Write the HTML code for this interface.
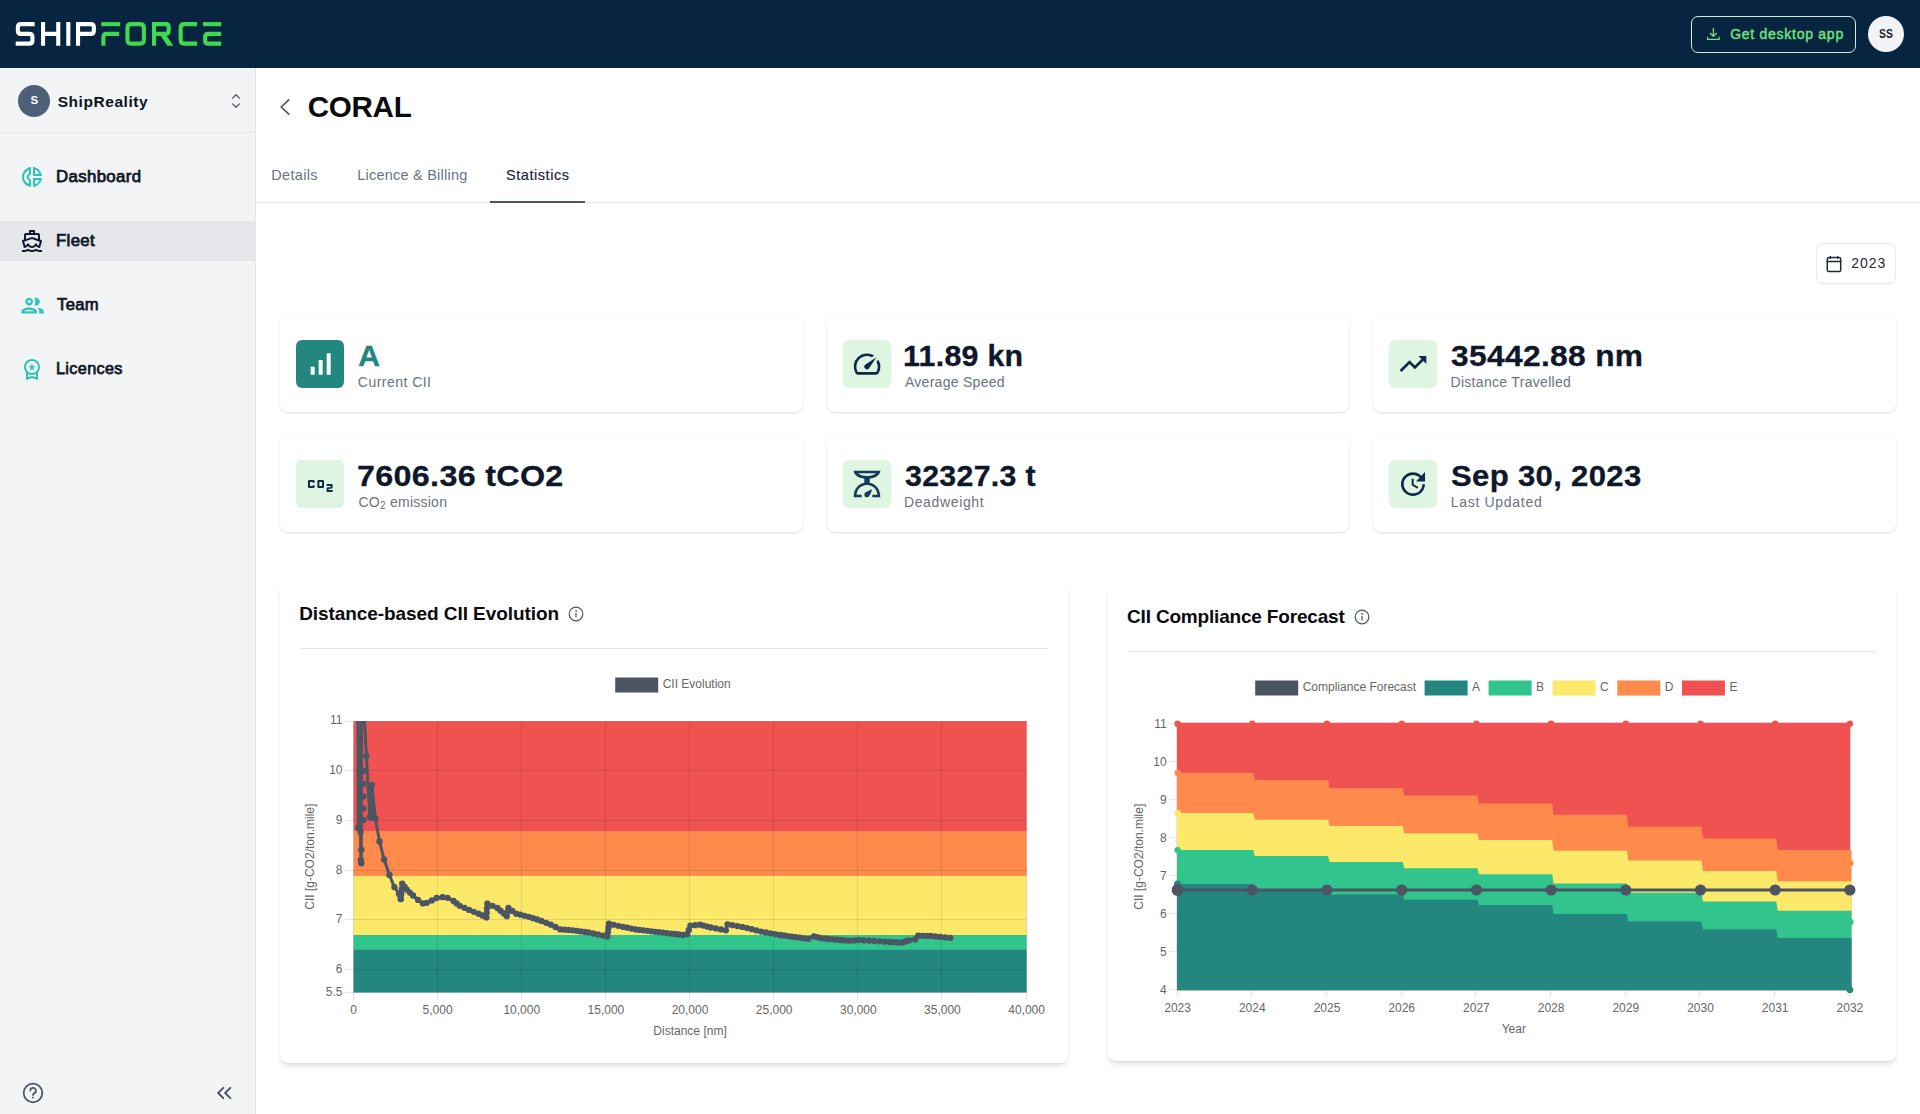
<!DOCTYPE html>
<html><head><meta charset="utf-8"><title>ShipForce</title>
<style>
html,body{margin:0;padding:0}
body{width:1920px;height:1114px;position:relative;overflow:hidden;background:#fff;font-family:"Liberation Sans", sans-serif;}
.t{position:absolute;white-space:nowrap;font-family:"Liberation Sans", sans-serif;}
.abs{position:absolute}
.card{position:absolute;background:#fff;border-radius:8px;box-shadow:0 1px 3px rgba(0,0,0,.10),0 1px 2px -1px rgba(0,0,0,.10);}
.ccard{position:absolute;background:#fff;border-radius:8px;box-shadow:0 4px 6px -1px rgba(0,0,0,.10),0 2px 4px -2px rgba(0,0,0,.10);}
.tile{position:absolute;width:48px;height:48px;border-radius:6px;background:#def5e1}
svg{position:absolute;overflow:visible}
</style></head><body>

<div class="abs" style="left:0;top:0;width:1920px;height:68px;background:#072441"></div>
<svg style="left:0;top:0" width="240" height="68" viewBox="0 0 240 68"><path d="M34.6,24.15 H21.05 Q17.85,24.15 17.85,27.349999999999998 V30.7 Q17.85,33.9 21.05,33.9 H29.250000000000004 Q32.45,33.9 32.45,37.1 V40.449999999999996 Q32.45,43.65 29.250000000000004,43.65 H15.7" stroke="#ffffff" stroke-width="4.1" fill="none" stroke-linejoin="miter"/><path d="M43.05,22 V45.8 M58.25,22 V45.8 M43.05,33.9 H58.25" stroke="#ffffff" stroke-width="4.1" fill="none" stroke-linejoin="miter"/><path d="M68.3,22 V45.8" stroke="#ffffff" stroke-width="4.1" fill="none" stroke-linejoin="miter"/><path d="M78.05,45.8 V24.15 H90.64999999999999 Q93.85,24.15 93.85,27.349999999999998 V30.7 Q93.85,33.9 90.64999999999999,33.9 H78.05" stroke="#ffffff" stroke-width="4.1" fill="none" stroke-linejoin="miter"/><path d="M101.25,24.15 H120.2" stroke="#3fd94f" stroke-width="4.1" fill="none" stroke-linejoin="miter"/><path d="M119.2,33.9 H106.60000000000001 Q103.4,33.9 103.4,37.1 V45.8" stroke="#3fd94f" stroke-width="4.1" fill="none" stroke-linejoin="miter"/><path d="M131.05,24.15 H140.3 Q143.9,24.15 143.9,27.75 V40.05 Q143.9,43.65 140.3,43.65 H131.05 Q127.45,43.65 127.45,40.05 V27.75 Q127.45,24.15 131.05,24.15 Z" stroke="#3fd94f" stroke-width="4.1" fill="none" stroke-linejoin="miter"/><path d="M154.05,45.8 V24.15 H165.5 Q168.7,24.15 168.7,27.349999999999998 V30.7 Q168.7,33.9 165.5,33.9 H154.05" stroke="#3fd94f" stroke-width="4.1" fill="none" stroke-linejoin="miter"/><path d="M160.2,35.1 L166.1,35.1 L173.4,45.8 L167.4,45.8 Z" fill="#3fd94f"/><path d="M197.1,24.15 H184.25 Q180.65,24.15 180.65,27.75 V40.05 Q180.65,43.65 184.25,43.65 H197.1" stroke="#3fd94f" stroke-width="4.1" fill="none" stroke-linejoin="miter"/><path d="M203,24.15 H221.2" stroke="#3fd94f" stroke-width="4.1" fill="none" stroke-linejoin="miter"/><path d="M221.2,33.9 H208.35 Q205.15,33.9 205.15,37.1 V40.449999999999996 Q205.15,43.65 208.35,43.65 H221.2" stroke="#3fd94f" stroke-width="4.1" fill="none" stroke-linejoin="miter"/></svg>
<div class="abs" style="left:1691px;top:16px;width:163px;height:35px;border:1px solid #cdeed3;border-radius:7px"></div>
<svg style="left:1705px;top:26px" width="16" height="16" viewBox="0 0 16 16" fill="none" stroke="#6fe27c" stroke-width="1.25" stroke-linecap="round" stroke-linejoin="round"><path d="M8.3 2.4v7.9M5.2 7.2l3.1 3.1 3.1-3.1M2.5 11v2.4h11.7V11"/></svg>
<div class="t " id="t1" style="left:1730.14px;top:27.15px;font-size:14px;line-height:14px;color:#6fe27c;font-weight:normal;letter-spacing:0.736px;-webkit-text-stroke:0.45px #6fe27c;">Get desktop app</div>
<div class="abs" style="left:1868px;top:16px;width:36px;height:36px;border-radius:50%;background:#f3f4f6"></div>
<div class="t " id="t2" style="left:1879.2px;top:27.84px;font-size:12px;line-height:12px;color:#111827;font-weight:bold;letter-spacing:0px;transform:scaleX(0.86);transform-origin:0 0;">SS</div>
<div class="abs" style="left:0;top:68px;width:255px;height:1046px;background:#f3f4f6;border-right:1px solid #e5e7eb"></div>
<div class="abs" style="left:0;top:132px;width:255px;height:1px;background:#e5e7eb"></div>
<div class="abs" style="left:18px;top:85px;width:32px;height:32px;border-radius:50%;background:#4c6079"></div>
<div class="t " id="t3" style="left:30.4px;top:95.37px;font-size:11.5px;line-height:11.5px;color:#fff;font-weight:bold;letter-spacing:0px;">S</div>
<div class="t " id="t4" style="left:57.73px;top:93.88px;font-size:15.5px;line-height:15.5px;color:#0b1220;font-weight:bold;letter-spacing:0.545px;">ShipReality</div>
<svg style="left:230px;top:92px" width="12" height="18" viewBox="0 0 12 18" fill="none" stroke="#4b5563" stroke-width="1.3" stroke-linecap="round" stroke-linejoin="round"><path d="M2.6 6.1L6 2.7l3.4 3.4M2.6 11.9L6 15.3l3.4-3.4"/></svg>
<div class="abs" style="left:0;top:221px;width:255px;height:40px;background:#e5e7eb"></div>
<svg style="left:20px;top:165px" width="24" height="24" viewBox="0 0 24 24" fill="#2ec4b6"><path d="M11 2.050C5.950 2.550 2 6.810 2 12s3.950 9.450 9 9.950V14.900l-1.800-1.700c-.700-.700-.700-1.800 0-2.500L11 9.050V2.050zM9 5.100v3.100l-1.200 1.100c-1.500 1.500-1.500 3.900 0 5.400L9 15.800v3.100C6.100 17.700 4 15.100 4 12s2.100-5.700 5-6.900zM13 2.050V11h8.950C21.500 6.250 17.750 2.500 13 2.050zm2 2.550c2.100.800 3.700 2.400 4.400 4.400H15V4.600zM13 13v8.950c4.750-.450 8.500-4.200 8.950-8.950H13zm2 2h4.400c-.700 2-2.300 3.600-4.400 4.400V15z"/></svg><svg style="left:20px;top:229px" width="24" height="24" viewBox="0 0 24 24" fill="#111827"><path d="M13 3v1h-2V3h2m-1 7.110l5.380 1.770 2.390.78-1.120 3.970c-.540-.300-.940-.710-1.140-.940L16 13.960l-1.510 1.720c-.340.400-1.280 1.320-2.490 1.320s-2.150-.920-2.490-1.320L8 13.960l-1.510 1.720c-.200.230-.600.630-1.140.930l-1.130-3.960 2.400-.790L12 10.110M15 1H9v3H6c-1.100 0-2 .900-2 2v4.620l-1.290.420c-.260.080-.480.260-.600.500s-.150.520-.060.780L3.950 19H4c1.600 0 3.020-.880 4-2 .980 1.120 2.400 2 4 2s3.020-.880 4-2c.980 1.120 2.400 2 4 2h.050l1.890-6.680c.080-.260.060-.540-.060-.780s-.340-.420-.600-.500L20 10.620V6c0-1.100-.900-2-2-2h-3V1zM6 9.970V6h12v3.970L12 8 6 9.970zm10 9.710c-1.220.850-2.610 1.280-4 1.280s-2.780-.430-4-1.280C6.780 20.530 5.390 21 4 21H2v2h2c1.380 0 2.740-.350 4-.990 1.260.640 2.630.970 4 .970s2.740-.320 4-.970c1.260.650 2.620.990 4 .990h2v-2h-2c-1.390 0-2.780-.470-4-1.320z"/></svg><svg style="left:18.5px;top:291.5px" width="27" height="27" viewBox="0 0 24 24" fill="#2ec4b6"><path d="M9 13.750c-2.340 0-7 1.170-7 3.500V19h14v-1.750c0-2.330-4.660-3.500-7-3.500zM4.340 17c.840-.580 2.870-1.250 4.660-1.250s3.820.670 4.660 1.250H4.340zM9 12c1.930 0 3.500-1.570 3.500-3.500S10.930 5 9 5 5.500 6.570 5.500 8.500 7.070 12 9 12zm0-5c.830 0 1.500.670 1.500 1.500S9.830 10 9 10s-1.500-.670-1.500-1.500S8.170 7 9 7zm7.040 6.810c1.160.840 1.960 1.960 1.960 3.440V19h4v-1.750c0-2.020-3.500-3.170-5.960-3.440zM15 12c1.930 0 3.500-1.570 3.500-3.500S16.930 5 15 5c-.540 0-1.040.130-1.500.350.630.890 1 1.980 1 3.150s-.370 2.260-1 3.150c.460.220.960.350 1.500.350z"/></svg><svg style="left:20px;top:356.5px" width="24" height="24" viewBox="0 0 24 24" fill="#2ec4b6"><path d="M9.680 13.690L12 11.930l2.310 1.760-.880-2.850L15.750 9h-2.840L12 6.190 11.090 9H8.250l2.310 1.840-.880 2.850zM20 10c0-4.420-3.580-8-8-8s-8 3.580-8 8c0 2.030.760 3.870 2 5.280V23l6-2 6 2v-7.720c1.240-1.410 2-3.250 2-5.280zm-8-6c3.310 0 6 2.690 6 6s-2.690 6-6 6-6-2.690-6-6 2.690-6 6-6zm0 15l-4 1.020v-3.100c1.180.680 2.540 1.080 4 1.080s2.820-.400 4-1.080v3.100L12 19z"/></svg>
<div class="t " id="t5" style="left:56.08px;top:169.06px;font-size:16px;line-height:16px;color:#111827;font-weight:normal;letter-spacing:0.35px;-webkit-text-stroke:0.75px #111827;transform:scaleX(1.0488);transform-origin:0 0;">Dashboard</div>
<div class="t " id="t6" style="left:56.08px;top:233.06px;font-size:16px;line-height:16px;color:#111827;font-weight:normal;letter-spacing:0.35px;-webkit-text-stroke:0.75px #111827;transform:scaleX(1.0445);transform-origin:0 0;">Fleet</div>
<div class="t " id="t7" style="left:56.81px;top:297.06px;font-size:16px;line-height:16px;color:#111827;font-weight:normal;letter-spacing:0.35px;-webkit-text-stroke:0.75px #111827;transform:scaleX(1.0358);transform-origin:0 0;">Team</div>
<div class="t " id="t8" style="left:55.53px;top:361.06px;font-size:16px;line-height:16px;color:#111827;font-weight:normal;letter-spacing:0.35px;-webkit-text-stroke:0.75px #111827;transform:scaleX(1.013);transform-origin:0 0;">Licences</div>
<svg style="left:22px;top:1082px" width="22" height="22" viewBox="0 0 22 22" fill="none" stroke="#4b5563" stroke-width="1.8" stroke-linecap="round" stroke-linejoin="round"><circle cx="11" cy="11" r="9.3"/><path d="M8.3 8.6a2.8 2.8 0 1 1 3.9 2.6c-.8.4-1.2.9-1.2 1.8"/><circle cx="11" cy="15.6" r=".6" fill="#4b5563" stroke-width=".8"/></svg>
<svg style="left:216px;top:1086px" width="16" height="14" viewBox="0 0 16 14" fill="none" stroke="#4b5563" stroke-width="1.9" stroke-linecap="round" stroke-linejoin="round"><path d="M7.3 1.8L2.2 7l5.1 5.2M14.3 1.8L9.2 7l5.1 5.2"/></svg>
<svg style="left:278px;top:97px" width="14" height="20" viewBox="0 0 14 20" fill="none" stroke="#4b5563" stroke-width="1.7" stroke-linecap="round" stroke-linejoin="round"><path d="M10.8 2.8L3.2 10l7.6 7.2"/></svg>
<div class="t " id="t9" style="left:307.64px;top:91.64px;font-size:29.6px;line-height:29.6px;color:#0a0a0f;font-weight:bold;letter-spacing:-0.258px;">CORAL</div>
<div class="abs" style="left:256px;top:202px;width:1664px;height:1px;background:#e5e7eb"></div>
<div class="abs" style="left:490px;top:201px;width:95px;height:2px;background:#4b5563"></div>
<div class="t " id="t10" style="left:271.32px;top:168.03px;font-size:14.5px;line-height:14.5px;color:#6b7280;font-weight:normal;letter-spacing:0.331px;">Details</div>
<div class="t " id="t11" style="left:357.32px;top:168.03px;font-size:14.5px;line-height:14.5px;color:#6b7280;font-weight:normal;letter-spacing:0.22px;">Licence &amp; Billing</div>
<div class="t " id="t12" style="left:505.99px;top:168.03px;font-size:14.5px;line-height:14.5px;color:#1f2937;font-weight:normal;letter-spacing:0.558px;-webkit-text-stroke:0.2px #1f2937">Statistics</div>
<div class="abs" style="left:1816px;top:243px;width:78px;height:39px;border:1px solid #e8eaed;border-radius:8px;background:#fff;box-shadow:0 1px 2px rgba(0,0,0,.04)"></div>
<svg style="left:1825px;top:254px" width="18" height="20" viewBox="0 0 18 20" fill="none" stroke="#1f2937" stroke-width="1.5" stroke-linecap="round" stroke-linejoin="round"><rect x="2.3" y="3.6" width="13.4" height="14" rx="1.6"/><path d="M2.3 7.6h13.4M5.3 2.7v1.6M12.7 2.7v1.6"/></svg>
<div class="t " id="t13" style="left:1851.15px;top:255.95px;font-size:14px;line-height:14px;color:#1f2937;font-weight:normal;letter-spacing:1.01px;">2023</div>
<div class="card" style="left:280px;top:316px;width:523px;height:96px"></div>
<div class="card" style="left:827px;top:316px;width:522px;height:96px"></div>
<div class="card" style="left:1373px;top:316px;width:523px;height:96px"></div>
<div class="card" style="left:280px;top:436px;width:523px;height:96px"></div>
<div class="card" style="left:827px;top:436px;width:522px;height:96px"></div>
<div class="card" style="left:1373px;top:436px;width:523px;height:96px"></div>
<div class="tile" style="left:296px;top:340px;background:#23867f"></div><svg style="left:304px;top:348px" width="32" height="32" viewBox="0 0 24 24" fill="#fff"><path d="M17 4h3v16h-3zM5 14h3v6H5zM11 9h3v11h-3z"/></svg>
<div class="tile" style="left:843px;top:340px;background:#def5e1"></div><svg style="left:851px;top:348px" width="32" height="32" viewBox="0 0 24 24" fill="#0f2a47"><path d="M20.38 8.57l-1.23 1.85a8 8 0 0 1-.22 7.58H5.07A8 8 0 0 1 15.58 6.85l1.85-1.23A10 10 0 0 0 3.35 19a2 2 0 0 0 1.72 1h13.85a2 2 0 0 0 1.74-1 10 10 0 0 0-.27-10.44zm-9.79 6.84a2 2 0 0 0 2.83 0l5.66-8.49-8.49 5.66a2 2 0 0 0 0 2.83z"/></svg>
<div class="tile" style="left:1389px;top:340px;background:#def5e1"></div><svg style="left:1397px;top:348px" width="32" height="32" viewBox="0 0 24 24" fill="#0f2a47"><path d="M16 6l2.29 2.29-4.88 4.88-4-4L2 16.59 3.41 18l6-6 4 4 6.3-6.29L22 12V6z"/></svg>
<div class="tile" style="left:296px;top:460px;background:#def5e1"></div><svg style="left:304px;top:468px" width="32" height="32" viewBox="0 0 24 24" fill="#0f2a47"><path d="M14 9h-3c-.55 0-1 .45-1 1v4c0 .55.45 1 1 1h3c.55 0 1-.45 1-1v-4c0-.55-.45-1-1-1zm-.5 4.500h-2v-3h2v3zM8 13v1c0 .55-.45 1-1 1H4c-.55 0-1-.45-1-1v-4c0-.55.45-1 1-1h3c.55 0 1 .45 1 1v1H6.500v-.5h-2v3h2V13H8zM20.500 15.500h-2v1h3V18H17v-2.500c0-.55.45-1 1-1h2v-1h-3V12h3.500c.55 0 1 .45 1 1v1.500c0 .55-.45 1-1 1z"/></svg>
<div class="tile" style="left:843px;top:460px;background:#def5e1"></div><svg style="left:851px;top:468px" width="32" height="32" viewBox="0 0 24 24" fill="#173a5a"><path d="M14 11V8c4.560-.580 8-3.100 8-6H2c0 2.900 3.440 5.420 8 6v3c-3.680.730-8 3.610-8 11h6v-2H4.130c.930-6.830 6.650-7.200 7.870-7.200s6.940.370 7.870 7.200H16v2h6c0-7.390-4.320-10.270-8-11zM18.870 4C17.500 5.190 15 6 12 6s-5.500-.810-6.870-2h13.740zM12 22c-1.100 0-2-.900-2-2 0-.550.220-1.050.590-1.410C11.390 17.790 16 16 16 16s-1.790 4.610-2.590 5.410c-.360.370-.860.590-1.410.590z"/></svg>
<div class="tile" style="left:1389px;top:460px;background:#def5e1"></div><svg style="left:1397px;top:468px" width="32" height="32" viewBox="0 0 24 24" fill="#0f2a47"><path d="M21 10.120h-6.780l2.740-2.820c-2.730-2.700-7.150-2.800-9.880-.1-2.730 2.710-2.730 7.080 0 9.790s7.150 2.710 9.880 0C18.320 15.650 19 14.080 19 12.100h2c0 1.980-.88 4.550-2.640 6.290-3.510 3.480-9.210 3.480-12.720 0-3.500-3.470-3.530-9.110-.02-12.580s9.140-3.470 12.650 0L21 3v7.120zM12.500 8v4.250l3.500 2.080-.72 1.210L11 13V8h1.500z"/></svg>
<div class="t " id="t14" style="left:357.98px;top:341.31px;font-size:30px;line-height:30px;color:#23867f;font-weight:bold;letter-spacing:0px;-webkit-text-stroke:0.3px #23867f;transform:scaleX(1.0183);transform-origin:0 0;">A</div>
<div class="t " id="t15" style="left:357.87px;top:374.85px;font-size:14px;line-height:14px;color:#6b7280;font-weight:normal;letter-spacing:0.469px;">Current CII</div>
<div class="t " id="t16" style="left:903.26px;top:341.31px;font-size:30px;line-height:30px;color:#0f172a;font-weight:bold;letter-spacing:0.3px;-webkit-text-stroke:0.3px #0f172a;transform:scaleX(1.0106);transform-origin:0 0;">11.89 kn</div>
<div class="t " id="t17" style="left:904.91px;top:374.85px;font-size:14px;line-height:14px;color:#6b7280;font-weight:normal;letter-spacing:0.285px;">Average Speed</div>
<div class="t " id="t18" style="left:1451.36px;top:341.31px;font-size:30px;line-height:30px;color:#0f172a;font-weight:bold;letter-spacing:0.3px;-webkit-text-stroke:0.3px #0f172a;transform:scaleX(1.0586);transform-origin:0 0;">35442.88 nm</div>
<div class="t " id="t19" style="left:1450.48px;top:374.85px;font-size:14px;line-height:14px;color:#6b7280;font-weight:normal;letter-spacing:0.31px;">Distance Travelled</div>
<div class="t " id="t20" style="left:356.88px;top:461.31px;font-size:30px;line-height:30px;color:#0f172a;font-weight:bold;letter-spacing:0.3px;-webkit-text-stroke:0.3px #0f172a;transform:scaleX(1.0759);transform-origin:0 0;">7606.36 tCO2</div>
<div class="t " id="t21" style="left:358.5px;top:494.85px;font-size:14px;line-height:14px;color:#6b7280;font-weight:normal;letter-spacing:0.25px;">CO<span style="font-size:10px;position:relative;top:2.5px">2</span> emission</div>
<div class="t " id="t22" style="left:904.89px;top:461.31px;font-size:30px;line-height:30px;color:#0f172a;font-weight:bold;letter-spacing:0.3px;-webkit-text-stroke:0.3px #0f172a;transform:scaleX(1.0104);transform-origin:0 0;">32327.3 t</div>
<div class="t " id="t23" style="left:903.91px;top:494.85px;font-size:14px;line-height:14px;color:#6b7280;font-weight:normal;letter-spacing:0.646px;">Deadweight</div>
<div class="t " id="t24" style="left:1451.15px;top:461.31px;font-size:30px;line-height:30px;color:#0f172a;font-weight:bold;letter-spacing:0.3px;-webkit-text-stroke:0.3px #0f172a;transform:scaleX(1.0368);transform-origin:0 0;">Sep 30, 2023</div>
<div class="t " id="t25" style="left:1450.73px;top:494.85px;font-size:14px;line-height:14px;color:#6b7280;font-weight:normal;letter-spacing:0.697px;">Last Updated</div>
<div class="ccard" style="left:280px;top:583px;width:788px;height:480px"></div>
<div class="ccard" style="left:1108px;top:586px;width:788px;height:475px"></div>
<div class="t " id="t26" style="left:299.2px;top:604.12px;font-size:19px;line-height:19px;color:#0a0a0f;font-weight:bold;letter-spacing:-0.072px;">Distance-based CII Evolution</div>
<div class="t " id="t27" style="left:1127.08px;top:607.12px;font-size:19px;line-height:19px;color:#0a0a0f;font-weight:bold;letter-spacing:-0.184px;">CII Compliance Forecast</div>
<svg style="left:568px;top:606px" width="16" height="16" viewBox="0 0 16 16" fill="none" stroke="#4b5563" stroke-width="1.2" stroke-linecap="round"><circle cx="8" cy="8" r="6.8"/><path d="M8 7.4v3.6"/><circle cx="8" cy="5" r=".5" fill="#4b5563" stroke-width=".6"/></svg>
<svg style="left:1353.5px;top:609px" width="16" height="16" viewBox="0 0 16 16" fill="none" stroke="#4b5563" stroke-width="1.2" stroke-linecap="round"><circle cx="8" cy="8" r="6.8"/><path d="M8 7.4v3.6"/><circle cx="8" cy="5" r=".5" fill="#4b5563" stroke-width=".6"/></svg>
<div class="abs" style="left:300px;top:648px;width:748px;height:1px;background:#e5e7eb"></div>
<div class="abs" style="left:1128px;top:651px;width:748px;height:1px;background:#e5e7eb"></div>
<svg style="left:0;top:0" width="1920" height="1114" viewBox="0 0 1920 1114"><rect x="615.20" y="677.50" width="43" height="15" fill="#4b5563"/><text x="662.70" y="688.30" font-size="12" fill="#666666" text-anchor="start" font-family="Liberation Sans, sans-serif">CII Evolution</text><rect x="353.5" y="721.20" width="673.10" height="110.10" fill="#f05252"/><rect x="353.5" y="831.00" width="673.10" height="45.20" fill="#ff8a4c"/><rect x="353.5" y="875.90" width="673.10" height="59.40" fill="#fce96a"/><rect x="353.5" y="935.00" width="673.10" height="15.10" fill="#31c48d"/><rect x="353.5" y="949.80" width="673.10" height="42.70" fill="#23867f"/><line x1="353.50" y1="721.2" x2="353.50" y2="1000.2" stroke="rgba(0,0,0,0.1)" stroke-width="1"/><text x="353.50" y="1013.70" font-size="12" fill="#666666" text-anchor="middle" font-family="Liberation Sans, sans-serif">0</text><line x1="437.50" y1="721.2" x2="437.50" y2="1000.2" stroke="rgba(0,0,0,0.1)" stroke-width="1"/><text x="437.64" y="1013.70" font-size="12" fill="#666666" text-anchor="middle" font-family="Liberation Sans, sans-serif">5,000</text><line x1="521.50" y1="721.2" x2="521.50" y2="1000.2" stroke="rgba(0,0,0,0.1)" stroke-width="1"/><text x="521.77" y="1013.70" font-size="12" fill="#666666" text-anchor="middle" font-family="Liberation Sans, sans-serif">10,000</text><line x1="605.50" y1="721.2" x2="605.50" y2="1000.2" stroke="rgba(0,0,0,0.1)" stroke-width="1"/><text x="605.91" y="1013.70" font-size="12" fill="#666666" text-anchor="middle" font-family="Liberation Sans, sans-serif">15,000</text><line x1="689.50" y1="721.2" x2="689.50" y2="1000.2" stroke="rgba(0,0,0,0.1)" stroke-width="1"/><text x="690.05" y="1013.70" font-size="12" fill="#666666" text-anchor="middle" font-family="Liberation Sans, sans-serif">20,000</text><line x1="773.50" y1="721.2" x2="773.50" y2="1000.2" stroke="rgba(0,0,0,0.1)" stroke-width="1"/><text x="774.19" y="1013.70" font-size="12" fill="#666666" text-anchor="middle" font-family="Liberation Sans, sans-serif">25,000</text><line x1="857.50" y1="721.2" x2="857.50" y2="1000.2" stroke="rgba(0,0,0,0.1)" stroke-width="1"/><text x="858.32" y="1013.70" font-size="12" fill="#666666" text-anchor="middle" font-family="Liberation Sans, sans-serif">30,000</text><line x1="941.50" y1="721.2" x2="941.50" y2="1000.2" stroke="rgba(0,0,0,0.1)" stroke-width="1"/><text x="942.46" y="1013.70" font-size="12" fill="#666666" text-anchor="middle" font-family="Liberation Sans, sans-serif">35,000</text><line x1="1026.50" y1="721.2" x2="1026.50" y2="1000.2" stroke="rgba(0,0,0,0.1)" stroke-width="1"/><text x="1026.60" y="1013.70" font-size="12" fill="#666666" text-anchor="middle" font-family="Liberation Sans, sans-serif">40,000</text><line x1="345.5" y1="721.50" x2="1026.6" y2="721.50" stroke="rgba(0,0,0,0.1)" stroke-width="1"/><text x="342.50" y="723.80" font-size="12" fill="#666666" text-anchor="end" font-family="Liberation Sans, sans-serif">11</text><line x1="345.5" y1="770.50" x2="1026.6" y2="770.50" stroke="rgba(0,0,0,0.1)" stroke-width="1"/><text x="342.50" y="774.20" font-size="12" fill="#666666" text-anchor="end" font-family="Liberation Sans, sans-serif">10</text><line x1="345.5" y1="820.50" x2="1026.6" y2="820.50" stroke="rgba(0,0,0,0.1)" stroke-width="1"/><text x="342.50" y="824.20" font-size="12" fill="#666666" text-anchor="end" font-family="Liberation Sans, sans-serif">9</text><line x1="345.5" y1="870.50" x2="1026.6" y2="870.50" stroke="rgba(0,0,0,0.1)" stroke-width="1"/><text x="342.50" y="874.20" font-size="12" fill="#666666" text-anchor="end" font-family="Liberation Sans, sans-serif">8</text><line x1="345.5" y1="919.50" x2="1026.6" y2="919.50" stroke="rgba(0,0,0,0.1)" stroke-width="1"/><text x="342.50" y="923.20" font-size="12" fill="#666666" text-anchor="end" font-family="Liberation Sans, sans-serif">7</text><line x1="345.5" y1="969.50" x2="1026.6" y2="969.50" stroke="rgba(0,0,0,0.1)" stroke-width="1"/><text x="342.50" y="973.20" font-size="12" fill="#666666" text-anchor="end" font-family="Liberation Sans, sans-serif">6</text><line x1="345.5" y1="992.50" x2="1026.6" y2="992.50" stroke="rgba(0,0,0,0.1)" stroke-width="1"/><text x="342.50" y="996.20" font-size="12" fill="#666666" text-anchor="end" font-family="Liberation Sans, sans-serif">5.5</text><text x="690.05" y="1035.20" font-size="12" fill="#666666" text-anchor="middle" font-family="Liberation Sans, sans-serif">Distance [nm]</text><text x="314.50" y="856.70" font-size="12" fill="#666666" text-anchor="middle" font-family="Liberation Sans, sans-serif" transform="rotate(-90 314.5 856.7)">CII [g-CO2/ton.mile]</text><clipPath id="c1"><rect x="352.0" y="720.9000000000001" width="676.0999999999999" height="273.0"/></clipPath><g clip-path="url(#c1)"><polyline fill="none" stroke="#4b5563" stroke-width="3" stroke-linejoin="round" points="358.3,827.8 357.9,700.0 358.0,700.0 359.6,826.0 360.1,742.0 360.5,832.0 360.8,860.0 361.3,863.3 361.3,849.7 361.6,700.0 363.3,700.0 364.2,715.0 366.4,755.9 369.8,817.3 370.6,786.0 372.4,817.8 371.9,784.9 375.3,818.1 379.5,841.5 384.1,859.5 389.4,874.9 394.4,887.1 399.1,894.0 400.8,899.0 402.2,883.7 406.8,889.7 413.0,895.5 418.0,899.9 422.9,903.4 426.8,902.8 431.8,900.5 436.7,898.0 442.6,897.2 447.6,897.8 453.5,901.0 459.7,905.8 469.1,909.9 478.5,913.7 486.4,917.4 487.3,903.6 497.4,908.0 506.8,916.2 508.4,908.0 516.2,913.7 528.8,916.8 541.4,920.9 550.8,924.7 560.2,929.4 572.8,930.3 588.5,932.5 607.4,936.6 608.9,923.7 623.1,926.9 635.6,929.4 651.3,931.3 667.0,933.1 682.8,935.0 687.3,934.1 690.4,925.6 699.9,924.7 710.8,927.5 725.9,930.3 727.5,924.4 742.3,926.9 761.1,931.6 780.0,935.0 795.7,937.2 808.3,938.8 813.9,936.3 820.8,938.2 836.5,939.7 849.1,940.7 858.5,940.1 874.2,941.0 889.9,942.0 901.9,942.6 908.8,940.4 915.1,939.4 918.2,935.7 930.8,936.0 940.2,936.9 950.3,937.9"/><circle cx="358.3" cy="827.8" r="3.2" fill="#4b5563"/><circle cx="359.6" cy="826.0" r="3.2" fill="#4b5563"/><circle cx="360.1" cy="742.0" r="3.2" fill="#4b5563"/><circle cx="360.5" cy="832.0" r="3.2" fill="#4b5563"/><circle cx="360.8" cy="860.0" r="3.2" fill="#4b5563"/><circle cx="361.3" cy="863.3" r="3.2" fill="#4b5563"/><circle cx="361.3" cy="849.7" r="3.2" fill="#4b5563"/><circle cx="366.4" cy="755.9" r="3.2" fill="#4b5563"/><circle cx="369.8" cy="817.3" r="3.2" fill="#4b5563"/><circle cx="370.6" cy="786.0" r="3.2" fill="#4b5563"/><circle cx="372.4" cy="817.8" r="3.2" fill="#4b5563"/><circle cx="371.9" cy="784.9" r="3.2" fill="#4b5563"/><circle cx="375.3" cy="818.1" r="3.2" fill="#4b5563"/><circle cx="379.5" cy="841.5" r="3.2" fill="#4b5563"/><circle cx="384.1" cy="859.5" r="3.2" fill="#4b5563"/><circle cx="389.4" cy="874.9" r="3.2" fill="#4b5563"/><circle cx="394.4" cy="887.1" r="3.2" fill="#4b5563"/><circle cx="399.1" cy="894.0" r="3.2" fill="#4b5563"/><circle cx="400.8" cy="899.0" r="3.2" fill="#4b5563"/><circle cx="363.3" cy="771.0" r="3.2" fill="#4b5563"/><circle cx="363.3" cy="784.0" r="3.2" fill="#4b5563"/><circle cx="363.3" cy="796.5" r="3.2" fill="#4b5563"/><circle cx="363.3" cy="808.5" r="3.2" fill="#4b5563"/><circle cx="363.3" cy="820.0" r="3.2" fill="#4b5563"/></g><polyline fill="none" stroke="#4b5563" stroke-width="3.2" stroke-linejoin="round" stroke-linecap="round" points="400.8,899.0 402.2,883.7 406.8,889.7 413.0,895.5 418.0,899.9 422.9,903.4 426.8,902.8 431.8,900.5 436.7,898.0 442.6,897.2 447.6,897.8 453.5,901.0 459.7,905.8 469.1,909.9 478.5,913.7 486.4,917.4 487.3,903.6 497.4,908.0 506.8,916.2 508.4,908.0 516.2,913.7 528.8,916.8 541.4,920.9 550.8,924.7 560.2,929.4 572.8,930.3 588.5,932.5 607.4,936.6 608.9,923.7 623.1,926.9 635.6,929.4 651.3,931.3 667.0,933.1 682.8,935.0 687.3,934.1 690.4,925.6 699.9,924.7 710.8,927.5 725.9,930.3 727.5,924.4 742.3,926.9 761.1,931.6 780.0,935.0 795.7,937.2 808.3,938.8 813.9,936.3 820.8,938.2 836.5,939.7 849.1,940.7 858.5,940.1 874.2,941.0 889.9,942.0 901.9,942.6 908.8,940.4 915.1,939.4 918.2,935.7 930.8,936.0 940.2,936.9 950.3,937.9"/><g fill="#4b5563"><circle cx="400.8" cy="899.0" r="3.15"/><circle cx="401.3" cy="893.9" r="3.15"/><circle cx="401.7" cy="888.8" r="3.15"/><circle cx="402.2" cy="883.7" r="3.15"/><circle cx="404.5" cy="886.7" r="3.15"/><circle cx="406.8" cy="889.7" r="3.15"/><circle cx="409.9" cy="892.6" r="3.15"/><circle cx="413.0" cy="895.5" r="3.15"/><circle cx="418.0" cy="899.9" r="3.15"/><circle cx="422.9" cy="903.4" r="3.15"/><circle cx="426.8" cy="902.8" r="3.15"/><circle cx="431.8" cy="900.5" r="3.15"/><circle cx="436.7" cy="898.0" r="3.15"/><circle cx="442.6" cy="897.2" r="3.15"/><circle cx="447.6" cy="897.8" r="3.15"/><circle cx="453.5" cy="901.0" r="3.15"/><circle cx="456.6" cy="903.4" r="3.15"/><circle cx="459.7" cy="905.8" r="3.15"/><circle cx="464.4" cy="907.8" r="3.15"/><circle cx="469.1" cy="909.9" r="3.15"/><circle cx="473.8" cy="911.8" r="3.15"/><circle cx="478.5" cy="913.7" r="3.15"/><circle cx="482.4" cy="915.5" r="3.15"/><circle cx="486.4" cy="917.4" r="3.15"/><circle cx="486.7" cy="912.8" r="3.15"/><circle cx="487.0" cy="908.2" r="3.15"/><circle cx="487.3" cy="903.6" r="3.15"/><circle cx="492.4" cy="905.8" r="3.15"/><circle cx="497.4" cy="908.0" r="3.15"/><circle cx="500.5" cy="910.7" r="3.15"/><circle cx="503.7" cy="913.5" r="3.15"/><circle cx="506.8" cy="916.2" r="3.15"/><circle cx="507.6" cy="912.1" r="3.15"/><circle cx="508.4" cy="908.0" r="3.15"/><circle cx="512.3" cy="910.9" r="3.15"/><circle cx="516.2" cy="913.7" r="3.15"/><circle cx="520.4" cy="914.7" r="3.15"/><circle cx="524.6" cy="915.8" r="3.15"/><circle cx="528.8" cy="916.8" r="3.15"/><circle cx="533.0" cy="918.2" r="3.15"/><circle cx="537.2" cy="919.5" r="3.15"/><circle cx="541.4" cy="920.9" r="3.15"/><circle cx="546.1" cy="922.8" r="3.15"/><circle cx="550.8" cy="924.7" r="3.15"/><circle cx="555.5" cy="927.0" r="3.15"/><circle cx="560.2" cy="929.4" r="3.15"/><circle cx="564.4" cy="929.7" r="3.15"/><circle cx="568.6" cy="930.0" r="3.15"/><circle cx="572.8" cy="930.3" r="3.15"/><circle cx="576.7" cy="930.8" r="3.15"/><circle cx="580.6" cy="931.4" r="3.15"/><circle cx="584.6" cy="932.0" r="3.15"/><circle cx="588.5" cy="932.5" r="3.15"/><circle cx="593.2" cy="933.5" r="3.15"/><circle cx="598.0" cy="934.5" r="3.15"/><circle cx="602.7" cy="935.6" r="3.15"/><circle cx="607.4" cy="936.6" r="3.15"/><circle cx="607.9" cy="932.3" r="3.15"/><circle cx="608.4" cy="928.0" r="3.15"/><circle cx="608.9" cy="923.7" r="3.15"/><circle cx="613.6" cy="924.8" r="3.15"/><circle cx="618.4" cy="925.8" r="3.15"/><circle cx="623.1" cy="926.9" r="3.15"/><circle cx="627.3" cy="927.7" r="3.15"/><circle cx="631.4" cy="928.6" r="3.15"/><circle cx="635.6" cy="929.4" r="3.15"/><circle cx="639.5" cy="929.9" r="3.15"/><circle cx="643.5" cy="930.3" r="3.15"/><circle cx="647.4" cy="930.8" r="3.15"/><circle cx="651.3" cy="931.3" r="3.15"/><circle cx="655.2" cy="931.8" r="3.15"/><circle cx="659.1" cy="932.2" r="3.15"/><circle cx="663.1" cy="932.6" r="3.15"/><circle cx="667.0" cy="933.1" r="3.15"/><circle cx="671.0" cy="933.6" r="3.15"/><circle cx="674.9" cy="934.0" r="3.15"/><circle cx="678.8" cy="934.5" r="3.15"/><circle cx="682.8" cy="935.0" r="3.15"/><circle cx="687.3" cy="934.1" r="3.15"/><circle cx="688.8" cy="929.9" r="3.15"/><circle cx="690.4" cy="925.6" r="3.15"/><circle cx="695.1" cy="925.2" r="3.15"/><circle cx="699.9" cy="924.7" r="3.15"/><circle cx="703.5" cy="925.6" r="3.15"/><circle cx="707.2" cy="926.6" r="3.15"/><circle cx="710.8" cy="927.5" r="3.15"/><circle cx="715.8" cy="928.4" r="3.15"/><circle cx="720.9" cy="929.4" r="3.15"/><circle cx="725.9" cy="930.3" r="3.15"/><circle cx="727.5" cy="924.4" r="3.15"/><circle cx="732.4" cy="925.2" r="3.15"/><circle cx="737.4" cy="926.1" r="3.15"/><circle cx="742.3" cy="926.9" r="3.15"/><circle cx="747.0" cy="928.1" r="3.15"/><circle cx="751.7" cy="929.2" r="3.15"/><circle cx="756.4" cy="930.4" r="3.15"/><circle cx="761.1" cy="931.6" r="3.15"/><circle cx="765.8" cy="932.5" r="3.15"/><circle cx="770.5" cy="933.3" r="3.15"/><circle cx="775.3" cy="934.1" r="3.15"/><circle cx="780.0" cy="935.0" r="3.15"/><circle cx="783.9" cy="935.5" r="3.15"/><circle cx="787.9" cy="936.1" r="3.15"/><circle cx="791.8" cy="936.7" r="3.15"/><circle cx="795.7" cy="937.2" r="3.15"/><circle cx="799.9" cy="937.7" r="3.15"/><circle cx="804.1" cy="938.3" r="3.15"/><circle cx="808.3" cy="938.8" r="3.15"/><circle cx="813.9" cy="936.3" r="3.15"/><circle cx="817.3" cy="937.2" r="3.15"/><circle cx="820.8" cy="938.2" r="3.15"/><circle cx="824.7" cy="938.6" r="3.15"/><circle cx="828.6" cy="939.0" r="3.15"/><circle cx="832.6" cy="939.3" r="3.15"/><circle cx="836.5" cy="939.7" r="3.15"/><circle cx="840.7" cy="940.0" r="3.15"/><circle cx="844.9" cy="940.4" r="3.15"/><circle cx="849.1" cy="940.7" r="3.15"/><circle cx="853.8" cy="940.4" r="3.15"/><circle cx="858.5" cy="940.1" r="3.15"/><circle cx="863.7" cy="940.4" r="3.15"/><circle cx="869.0" cy="940.7" r="3.15"/><circle cx="874.2" cy="941.0" r="3.15"/><circle cx="879.4" cy="941.3" r="3.15"/><circle cx="884.7" cy="941.7" r="3.15"/><circle cx="889.9" cy="942.0" r="3.15"/><circle cx="893.9" cy="942.2" r="3.15"/><circle cx="897.9" cy="942.4" r="3.15"/><circle cx="901.9" cy="942.6" r="3.15"/><circle cx="905.3" cy="941.5" r="3.15"/><circle cx="908.8" cy="940.4" r="3.15"/><circle cx="915.1" cy="939.4" r="3.15"/><circle cx="918.2" cy="935.7" r="3.15"/><circle cx="922.4" cy="935.8" r="3.15"/><circle cx="926.6" cy="935.9" r="3.15"/><circle cx="930.8" cy="936.0" r="3.15"/><circle cx="935.5" cy="936.5" r="3.15"/><circle cx="940.2" cy="936.9" r="3.15"/><circle cx="945.2" cy="937.4" r="3.15"/><circle cx="950.3" cy="937.9" r="3.15"/></g></svg>
<svg style="left:0;top:0" width="1920" height="1114" viewBox="0 0 1920 1114"><rect x="1255.20" y="680.50" width="43" height="15" fill="#4b5563"/><text x="1302.70" y="691.30" font-size="12" fill="#666666" text-anchor="start" font-family="Liberation Sans, sans-serif">Compliance Forecast</text><rect x="1424.60" y="680.50" width="43" height="15" fill="#23867f"/><text x="1472.10" y="691.30" font-size="12" fill="#666666" text-anchor="start" font-family="Liberation Sans, sans-serif">A</text><rect x="1488.60" y="680.50" width="43" height="15" fill="#31c48d"/><text x="1536.10" y="691.30" font-size="12" fill="#666666" text-anchor="start" font-family="Liberation Sans, sans-serif">B</text><rect x="1552.60" y="680.50" width="43" height="15" fill="#fce96a"/><text x="1600.10" y="691.30" font-size="12" fill="#666666" text-anchor="start" font-family="Liberation Sans, sans-serif">C</text><rect x="1617.27" y="680.50" width="43" height="15" fill="#ff8a4c"/><text x="1664.77" y="691.30" font-size="12" fill="#666666" text-anchor="start" font-family="Liberation Sans, sans-serif">D</text><rect x="1681.94" y="680.50" width="43" height="15" fill="#f05252"/><text x="1729.44" y="691.30" font-size="12" fill="#666666" text-anchor="start" font-family="Liberation Sans, sans-serif">E</text><line x1="1177.50" y1="989.8" x2="1177.50" y2="997.8" stroke="rgba(0,0,0,0.1)" stroke-width="1"/><text x="1177.60" y="1011.60" font-size="12" fill="#666666" text-anchor="middle" font-family="Liberation Sans, sans-serif">2023</text><line x1="1251.50" y1="989.8" x2="1251.50" y2="997.8" stroke="rgba(0,0,0,0.1)" stroke-width="1"/><text x="1252.30" y="1011.60" font-size="12" fill="#666666" text-anchor="middle" font-family="Liberation Sans, sans-serif">2024</text><line x1="1326.50" y1="989.8" x2="1326.50" y2="997.8" stroke="rgba(0,0,0,0.1)" stroke-width="1"/><text x="1327.00" y="1011.60" font-size="12" fill="#666666" text-anchor="middle" font-family="Liberation Sans, sans-serif">2025</text><line x1="1401.50" y1="989.8" x2="1401.50" y2="997.8" stroke="rgba(0,0,0,0.1)" stroke-width="1"/><text x="1401.70" y="1011.60" font-size="12" fill="#666666" text-anchor="middle" font-family="Liberation Sans, sans-serif">2026</text><line x1="1475.50" y1="989.8" x2="1475.50" y2="997.8" stroke="rgba(0,0,0,0.1)" stroke-width="1"/><text x="1476.40" y="1011.60" font-size="12" fill="#666666" text-anchor="middle" font-family="Liberation Sans, sans-serif">2027</text><line x1="1550.50" y1="989.8" x2="1550.50" y2="997.8" stroke="rgba(0,0,0,0.1)" stroke-width="1"/><text x="1551.10" y="1011.60" font-size="12" fill="#666666" text-anchor="middle" font-family="Liberation Sans, sans-serif">2028</text><line x1="1625.50" y1="989.8" x2="1625.50" y2="997.8" stroke="rgba(0,0,0,0.1)" stroke-width="1"/><text x="1625.80" y="1011.60" font-size="12" fill="#666666" text-anchor="middle" font-family="Liberation Sans, sans-serif">2029</text><line x1="1699.50" y1="989.8" x2="1699.50" y2="997.8" stroke="rgba(0,0,0,0.1)" stroke-width="1"/><text x="1700.50" y="1011.60" font-size="12" fill="#666666" text-anchor="middle" font-family="Liberation Sans, sans-serif">2030</text><line x1="1774.50" y1="989.8" x2="1774.50" y2="997.8" stroke="rgba(0,0,0,0.1)" stroke-width="1"/><text x="1775.20" y="1011.60" font-size="12" fill="#666666" text-anchor="middle" font-family="Liberation Sans, sans-serif">2031</text><line x1="1849.50" y1="989.8" x2="1849.50" y2="997.8" stroke="rgba(0,0,0,0.1)" stroke-width="1"/><text x="1849.90" y="1011.60" font-size="12" fill="#666666" text-anchor="middle" font-family="Liberation Sans, sans-serif">2032</text><line x1="1169.6" y1="723.50" x2="1177.6" y2="723.50" stroke="rgba(0,0,0,0.1)" stroke-width="1"/><text x="1166.60" y="727.60" font-size="12" fill="#666666" text-anchor="end" font-family="Liberation Sans, sans-serif">11</text><line x1="1169.6" y1="761.50" x2="1177.6" y2="761.50" stroke="rgba(0,0,0,0.1)" stroke-width="1"/><text x="1166.60" y="765.61" font-size="12" fill="#666666" text-anchor="end" font-family="Liberation Sans, sans-serif">10</text><line x1="1169.6" y1="799.50" x2="1177.6" y2="799.50" stroke="rgba(0,0,0,0.1)" stroke-width="1"/><text x="1166.60" y="803.63" font-size="12" fill="#666666" text-anchor="end" font-family="Liberation Sans, sans-serif">9</text><line x1="1169.6" y1="837.50" x2="1177.6" y2="837.50" stroke="rgba(0,0,0,0.1)" stroke-width="1"/><text x="1166.60" y="841.64" font-size="12" fill="#666666" text-anchor="end" font-family="Liberation Sans, sans-serif">8</text><line x1="1169.6" y1="875.50" x2="1177.6" y2="875.50" stroke="rgba(0,0,0,0.1)" stroke-width="1"/><text x="1166.60" y="879.66" font-size="12" fill="#666666" text-anchor="end" font-family="Liberation Sans, sans-serif">7</text><line x1="1169.6" y1="913.50" x2="1177.6" y2="913.50" stroke="rgba(0,0,0,0.1)" stroke-width="1"/><text x="1166.60" y="917.67" font-size="12" fill="#666666" text-anchor="end" font-family="Liberation Sans, sans-serif">6</text><line x1="1169.6" y1="951.50" x2="1177.6" y2="951.50" stroke="rgba(0,0,0,0.1)" stroke-width="1"/><text x="1166.60" y="955.69" font-size="12" fill="#666666" text-anchor="end" font-family="Liberation Sans, sans-serif">5</text><line x1="1169.6" y1="989.50" x2="1177.6" y2="989.50" stroke="rgba(0,0,0,0.1)" stroke-width="1"/><text x="1166.60" y="993.70" font-size="12" fill="#666666" text-anchor="end" font-family="Liberation Sans, sans-serif">4</text><text x="1513.75" y="1033.20" font-size="12" fill="#666666" text-anchor="middle" font-family="Liberation Sans, sans-serif">Year</text><text x="1142.80" y="856.75" font-size="12" fill="#666666" text-anchor="middle" font-family="Liberation Sans, sans-serif" transform="rotate(-90 1142.8 856.75)">CII [g-CO2/ton.mile]</text><rect x="1176.8" y="722.7" width="673.50" height="267.10" fill="#f05252"/><circle cx="1177.6" cy="723.7" r="3.2" fill="#f05252"/><circle cx="1252.3" cy="723.7" r="3.2" fill="#f05252"/><circle cx="1327.0" cy="723.7" r="3.2" fill="#f05252"/><circle cx="1401.7" cy="723.7" r="3.2" fill="#f05252"/><circle cx="1476.4" cy="723.7" r="3.2" fill="#f05252"/><circle cx="1551.1" cy="723.7" r="3.2" fill="#f05252"/><circle cx="1625.8" cy="723.7" r="3.2" fill="#f05252"/><circle cx="1700.5" cy="723.7" r="3.2" fill="#f05252"/><circle cx="1775.2" cy="723.7" r="3.2" fill="#f05252"/><circle cx="1849.9" cy="723.7" r="3.2" fill="#f05252"/><circle cx="1177.6" cy="772.7" r="3.2" fill="#ff8a4c"/><circle cx="1850.4" cy="863.1" r="3.2" fill="#ff8a4c"/><polygon fill="#ff8a4c" points="1177.0,990.3 1177.0,772.7 1253.4,772.7 1254.8,780.1 1328.1,780.1 1329.5,788.2 1402.8,788.2 1404.2,795.5 1477.5,795.5 1478.9,803.6 1552.2,803.6 1553.6,814.8 1626.9,814.8 1628.3,826.7 1701.6,826.7 1703.0,838.6 1776.3,838.6 1777.7,850.1 1851.5,850.1 1851.5,990.3"/><circle cx="1177.6" cy="813.0" r="3.2" fill="#fce96a"/><polygon fill="#fce96a" points="1177.0,990.3 1177.0,813.0 1253.4,813.0 1254.8,819.7 1328.1,819.7 1329.5,826.0 1402.8,826.0 1404.2,833.3 1477.5,833.3 1478.9,840.0 1552.2,840.0 1553.6,850.8 1626.9,850.8 1628.3,860.6 1701.6,860.6 1703.0,871.1 1776.3,871.1 1777.7,881.3 1851.5,881.3 1851.5,990.3"/><circle cx="1177.6" cy="850.1" r="3.2" fill="#31c48d"/><circle cx="1850.4" cy="921.9" r="3.2" fill="#31c48d"/><polygon fill="#31c48d" points="1177.0,990.3 1177.0,850.1 1253.4,850.1 1254.8,856.1 1328.1,856.1 1329.5,862.0 1402.8,862.0 1404.2,868.3 1477.5,868.3 1478.9,874.3 1552.2,874.3 1553.6,883.4 1626.9,883.4 1628.3,892.8 1701.6,892.8 1703.0,901.6 1776.3,901.6 1777.7,910.7 1851.5,910.7 1851.5,990.3"/><circle cx="1177.6" cy="884.1" r="3.6" fill="#23867f"/><circle cx="1849.9" cy="989.8" r="3.4" fill="#23867f"/><polygon fill="#23867f" points="1177.0,990.3 1177.0,884.1 1253.4,884.1 1254.8,889.3 1328.1,889.3 1329.5,894.6 1402.8,894.6 1404.2,899.8 1477.5,899.8 1478.9,905.1 1552.2,905.1 1553.6,913.9 1626.9,913.9 1628.3,921.6 1701.6,921.6 1703.0,929.6 1776.3,929.6 1777.7,938.0 1851.5,938.0 1851.5,990.3"/><line x1="1177.6" y1="890" x2="1849.9" y2="890" stroke="#4b5563" stroke-width="3.2"/><circle cx="1177.6" cy="890.0" r="6.0" fill="#4b5563"/><circle cx="1252.3" cy="890.0" r="5.6" fill="#4b5563"/><circle cx="1327.0" cy="890.0" r="5.6" fill="#4b5563"/><circle cx="1401.7" cy="890.0" r="5.6" fill="#4b5563"/><circle cx="1476.4" cy="890.0" r="5.6" fill="#4b5563"/><circle cx="1551.1" cy="890.0" r="5.6" fill="#4b5563"/><circle cx="1625.8" cy="890.0" r="5.6" fill="#4b5563"/><circle cx="1700.5" cy="890.0" r="5.6" fill="#4b5563"/><circle cx="1775.2" cy="890.0" r="5.6" fill="#4b5563"/><circle cx="1849.9" cy="890.0" r="5.6" fill="#4b5563"/></svg>
</body></html>
